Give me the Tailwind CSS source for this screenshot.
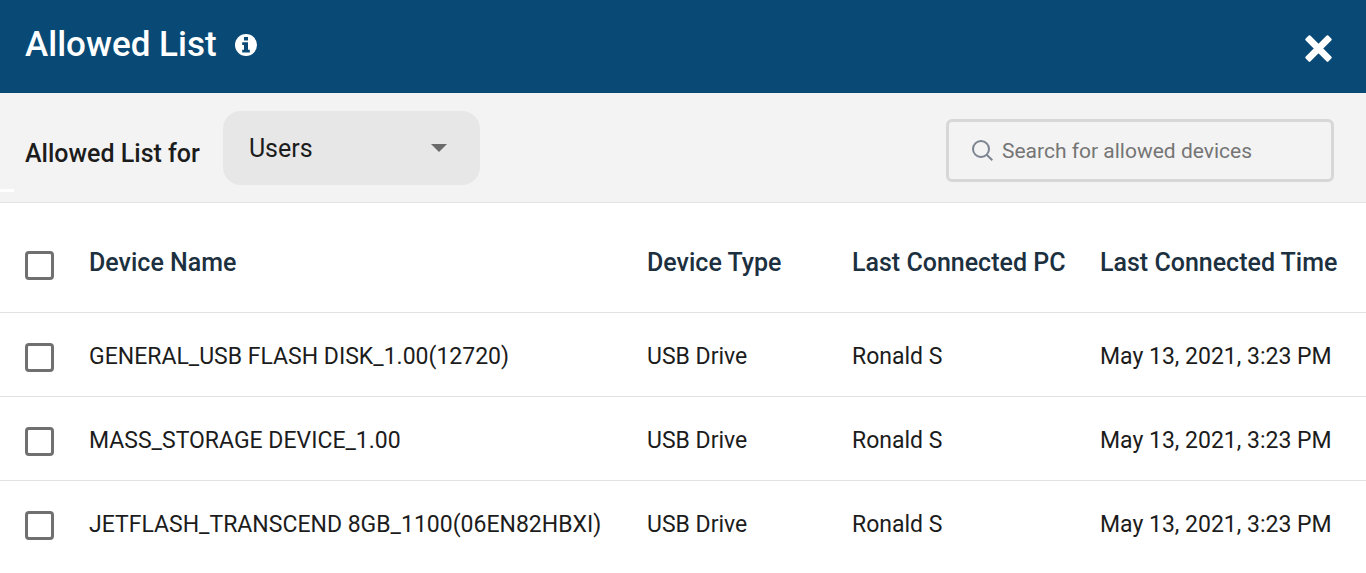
<!DOCTYPE html>
<html lang="en">
  <head>
    <meta charset="UTF-8" />
    <meta name="viewport" content="width=device-width, initial-scale=1.0" />
    <script src="https://cdn.jsdelivr.net/npm/@tailwindcss/browser@4"></script>
    <title>Allowed List</title>
  </head>
  <body class="bg-white min-h-screen font-['Roboto',sans-serif] text-[#1c1c1c]">
    <!-- title bar -->
    <header class="flex items-center justify-between bg-[#084a75] h-[93px] pl-[25px] pr-8">
      <div class="flex items-center gap-x-[17px] pb-1">
        <h1 class="text-[35px] leading-10 font-medium text-white">Allowed List</h1>
        <button type="button" aria-label="About the allowed list">
          <svg class="block w-6 h-6" viewBox="0 0 24 24">
            <circle cx="12" cy="12" r="11" fill="#fff" />
            <path d="M10 4h4v3.400h-4zM8.200 9.200H14v7.600h1.800v2.800H8.200v-2.800H10V12H8.200z" fill="#084a75" />
          </svg>
        </button>
      </div>
      <button type="button" aria-label="Close" class="pt-1">
        <svg class="block w-[30px] h-[30px]" viewBox="0 0 30 30">
          <path d="M5.500 5.500l18 18M23.500 5.500l-18 18" fill="none" stroke="#fff" stroke-width="5.500" stroke-linecap="square" />
          <path d="M5.500 2.800L2.800 5.500l20.700 20.700 2.700-2.700zM23.500 2.800l2.700 2.700L5.500 26.200l-2.700-2.700z" fill="#fff" stroke="#fff" stroke-width="3" stroke-linejoin="round" />
        </svg>
      </button>
    </header>
    <!-- filter and search -->
    <section class="relative flex items-center justify-between bg-[#f3f3f3] border-b border-[#e2e2e2] h-[110px] pl-[25px] pr-8">
      <span class="absolute left-0 bottom-[10px] w-3.5 h-[3px] bg-white"></span>
      <div class="flex items-center gap-x-[23px]">
        <label for="list-type" class="text-[25px] leading-8 font-medium pt-3">Allowed List for</label>
        <div class="relative">
          <select name="list-type" id="list-type" class="block appearance-none w-[257px] h-[74px] rounded-[18px] bg-[#e7e7e7] pl-[26px] pr-12 pt-0.5 text-[25px]">
            <option value="users" selected>Users</option>
            <option value="computers">Computers</option>
          </select>
          <svg class="absolute right-[33px] top-[33px] w-4 h-2 pointer-events-none" viewBox="0 0 16 8">
            <path d="M0 0h16L8 8z" fill="#6b6b6b" />
          </svg>
        </div>
      </div>
      <label for="device-search" class="flex items-center gap-x-2 w-[388px] h-[63px] mt-1.5 border-3 border-[#d7d7d7] rounded-md pl-[23px] pr-4">
        <svg class="w-[22px] h-[22px] shrink-0" viewBox="0 0 22 22" fill="none" stroke="#7d8491" stroke-width="2">
          <circle cx="9" cy="9" r="8" />
          <path d="M14.700 14.700l5.600 5.600" />
        </svg>
        <input type="text" name="device-search" id="device-search" aria-label="Search for allowed devices" placeholder="Search for allowed devices" class="min-w-0 flex-1 bg-transparent pt-0.5 text-[21px] outline-none placeholder:text-[#757575]" />
      </label>
    </section>
    <!-- device list -->
    <table class="w-full table-fixed text-left text-[23px] leading-8">
      <colgroup>
        <col class="w-[89px]" />
        <col />
        <col class="w-[205px]" />
        <col class="w-[248px]" />
        <col class="w-[266px]" />
      </colgroup>
      <thead class="text-[25px] text-[#1c3040]">
        <tr class="h-[109px] border-b border-[#e2e2e2]">
          <th class="pl-[25px] pt-4"><input type="checkbox" aria-label="Select all devices" class="block appearance-none w-[29px] h-[29px] border-3 border-[#707070] rounded-sm checked:bg-[#084a75]" /></th>
          <th class="font-medium pt-3">Device Name</th>
          <th class="font-medium pt-3">Device Type</th>
          <th class="font-medium pt-3">Last Connected PC</th>
          <th class="font-medium pt-3">Last Connected Time</th>
        </tr>
      </thead>
      <tbody>
        <tr class="h-[84px] border-b border-[#e2e2e2]">
          <td class="pl-[25px] pt-1.5"><input type="checkbox" aria-label="Select GENERAL_USB FLASH DISK_1.00(12720)" class="block appearance-none w-[29px] h-[29px] border-3 border-[#707070] rounded-sm checked:bg-[#084a75]" /></td>
          <td class="pt-1.5">GENERAL_USB FLASH DISK_1.00(12720)</td>
          <td class="pt-1.5">USB Drive</td>
          <td class="pt-1.5">Ronald S</td>
          <td class="pt-1.5">May 13, 2021, 3:23 PM</td>
        </tr>
        <tr class="h-[84px] border-b border-[#e2e2e2]">
          <td class="pl-[25px] pt-1.5"><input type="checkbox" aria-label="Select MASS_STORAGE DEVICE_1.00" class="block appearance-none w-[29px] h-[29px] border-3 border-[#707070] rounded-sm checked:bg-[#084a75]" /></td>
          <td class="pt-1.5">MASS_STORAGE DEVICE_1.00</td>
          <td class="pt-1.5">USB Drive</td>
          <td class="pt-1.5">Ronald S</td>
          <td class="pt-1.5">May 13, 2021, 3:23 PM</td>
        </tr>
        <tr class="h-[84px]">
          <td class="pl-[25px] pt-1.5"><input type="checkbox" aria-label="Select JETFLASH_TRANSCEND 8GB_1100(06EN82HBXI)" class="block appearance-none w-[29px] h-[29px] border-3 border-[#707070] rounded-sm checked:bg-[#084a75]" /></td>
          <td class="pt-1.5">JETFLASH_TRANSCEND 8GB_1100(06EN82HBXI)</td>
          <td class="pt-1.5">USB Drive</td>
          <td class="pt-1.5">Ronald S</td>
          <td class="pt-1.5">May 13, 2021, 3:23 PM</td>
        </tr>
      </tbody>
    </table>
  </body>
</html>
